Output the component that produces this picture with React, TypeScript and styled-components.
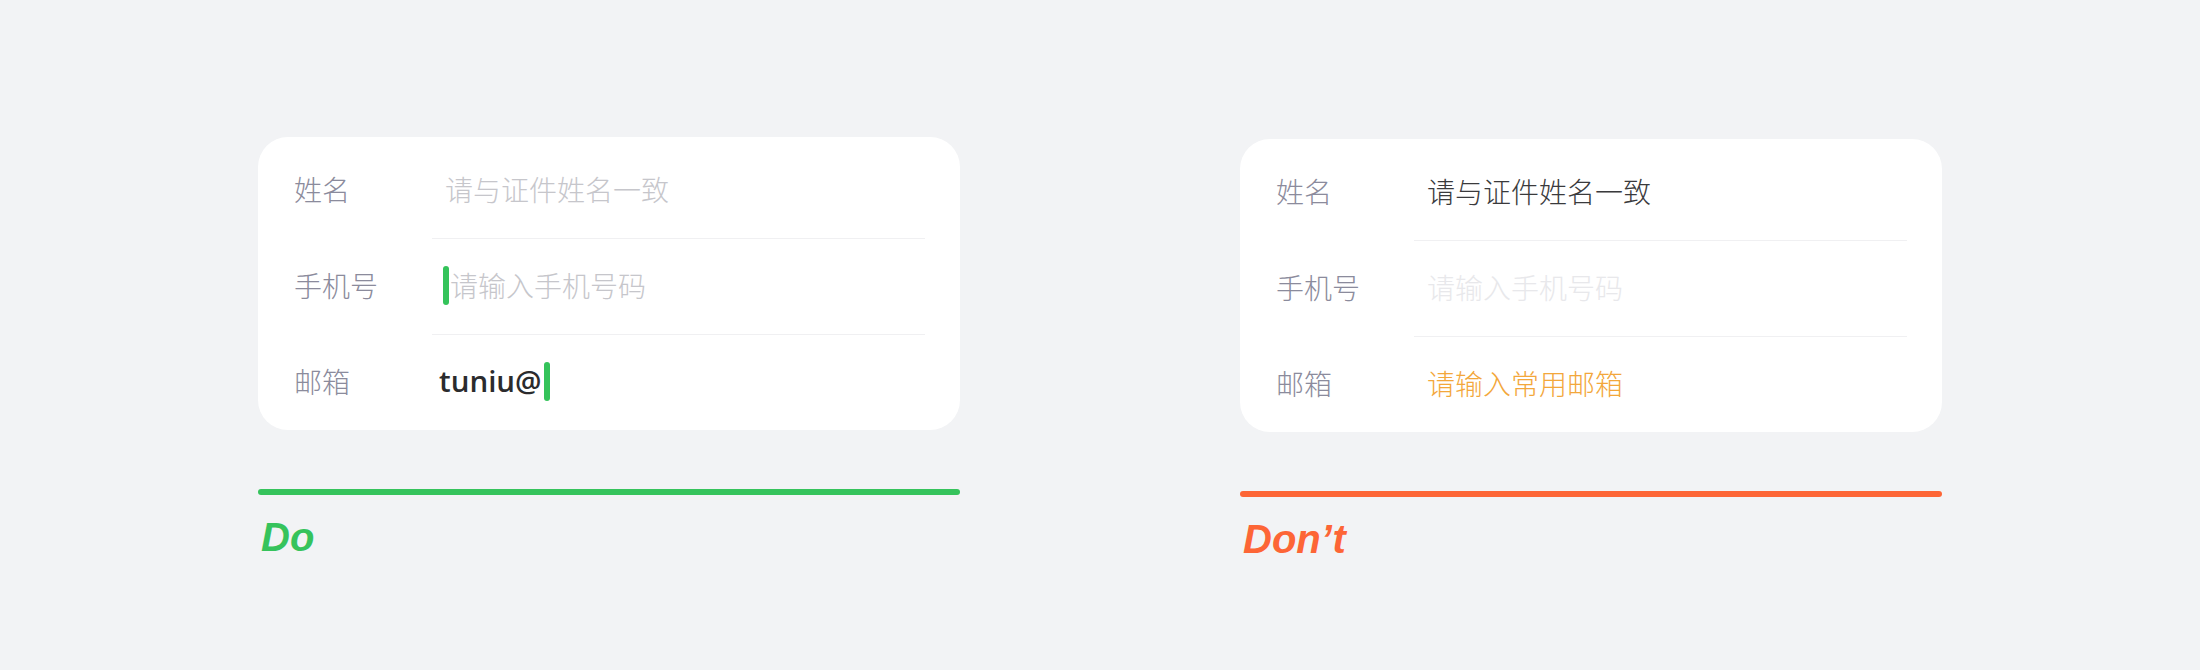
import React from "react"
import styled, { createGlobalStyle } from "styled-components"

const GlobalStyle = createGlobalStyle`
    html, body {
        margin: 0;
        padding: 0;
        background: #f2f3f5;
    }
    body {
        font-family: "Noto Sans CJK SC", "Liberation Sans", sans-serif;
    }
`

const Page = styled.div`
    display: flex;
    justify-content: center;
    gap: 280px;
    padding-top: 137px;
    height: 670px;
    box-sizing: border-box;
`

const Column = styled.div<{ $offset?: number }>`
    width: 702px;
    display: flex;
    flex-direction: column;
    margin-top: ${({ $offset }) => $offset || 0}px;
`

const Card = styled.div`
    background: #ffffff;
    border-radius: 30px;
    padding-top: 6px;
`

const Row = styled.div`
    height: 95px;
    box-sizing: border-box;
    padding-bottom: 3px;
    display: flex;
    align-items: center;
`

const Divider = styled.div`
    height: 1px;
    background: #f0f0f2;
    margin: 0 35px 0 174px;
`

const Label = styled.div`
    width: 148px;
    padding-left: 36px;
    flex-shrink: 0;
    font-size: 28px;
    font-weight: 300;
    line-height: 40px;
    color: #8b8b9c;
`

const tones: Record<string, string> = {
    placeholder: "#c6c6cb",
    faint: "#e8e8eb",
    filled: "#3a3a3c",
    warn: "#f3a73b",
}

const Value = styled.div<{ $tone: string; $indent?: number }>`
    display: flex;
    align-items: center;
    margin-left: ${({ $indent }) => $indent ?? 3}px;
    font-size: 28px;
    font-weight: 300;
    line-height: 40px;
    color: ${({ $tone }) => tones[$tone]};
`

const Caret = styled.span<{ $gap?: number }>`
    display: inline-block;
    width: 6px;
    height: 39px;
    border-radius: 3px;
    background: #34c35a;
    margin: 0 ${({ $gap }) => $gap || 0}px;
`

const Typed = styled.span`
    font-family: "Open Sans", "Liberation Sans", sans-serif;
    font-weight: 600;
    font-size: 29.5px;
    color: #2b2b2d;
`

const Bar = styled.div<{ $color: string }>`
    height: 6px;
    border-radius: 3px;
    background: ${({ $color }) => $color};
    margin-top: 59px;
`

const Verdict = styled.div<{ $color: string }>`
    margin-top: 18px;
    padding-left: 3px;
    font-family: "Liberation Sans", Arial, sans-serif;
    font-weight: 700;
    font-style: italic;
    font-size: 40px;
    line-height: 48px;
    color: ${({ $color }) => $color};
`

const App: React.FunctionComponent = () => {
    return (
        <>
            <GlobalStyle />
            <Page>
                <Column>
                    <Card>
                        <Row>
                            <Label>姓名</Label>
                            <Value $tone="placeholder">请与证件姓名一致</Value>
                        </Row>
                        <Divider />
                        <Row>
                            <Label>手机号</Label>
                            <Value $tone="placeholder" $indent={0}>
                                <Caret $gap={1} />
                                请输入手机号码
                            </Value>
                        </Row>
                        <Divider />
                        <Row>
                            <Label>邮箱</Label>
                            <Value $tone="filled" $indent={-3}>
                                <Typed>tuniu@</Typed>
                                <Caret $gap={2} />
                            </Value>
                        </Row>
                    </Card>
                    <Bar $color="#36c35c" />
                    <Verdict $color="#36c35c">Do</Verdict>
                </Column>

                <Column $offset={2}>
                    <Card>
                        <Row>
                            <Label>姓名</Label>
                            <Value $tone="filled">请与证件姓名一致</Value>
                        </Row>
                        <Divider />
                        <Row>
                            <Label>手机号</Label>
                            <Value $tone="faint">请输入手机号码</Value>
                        </Row>
                        <Divider />
                        <Row>
                            <Label>邮箱</Label>
                            <Value $tone="warn">请输入常用邮箱</Value>
                        </Row>
                    </Card>
                    <Bar $color="#fd6536" />
                    <Verdict $color="#fd6536">Don’t</Verdict>
                </Column>
            </Page>
        </>
    )
}

export default App
